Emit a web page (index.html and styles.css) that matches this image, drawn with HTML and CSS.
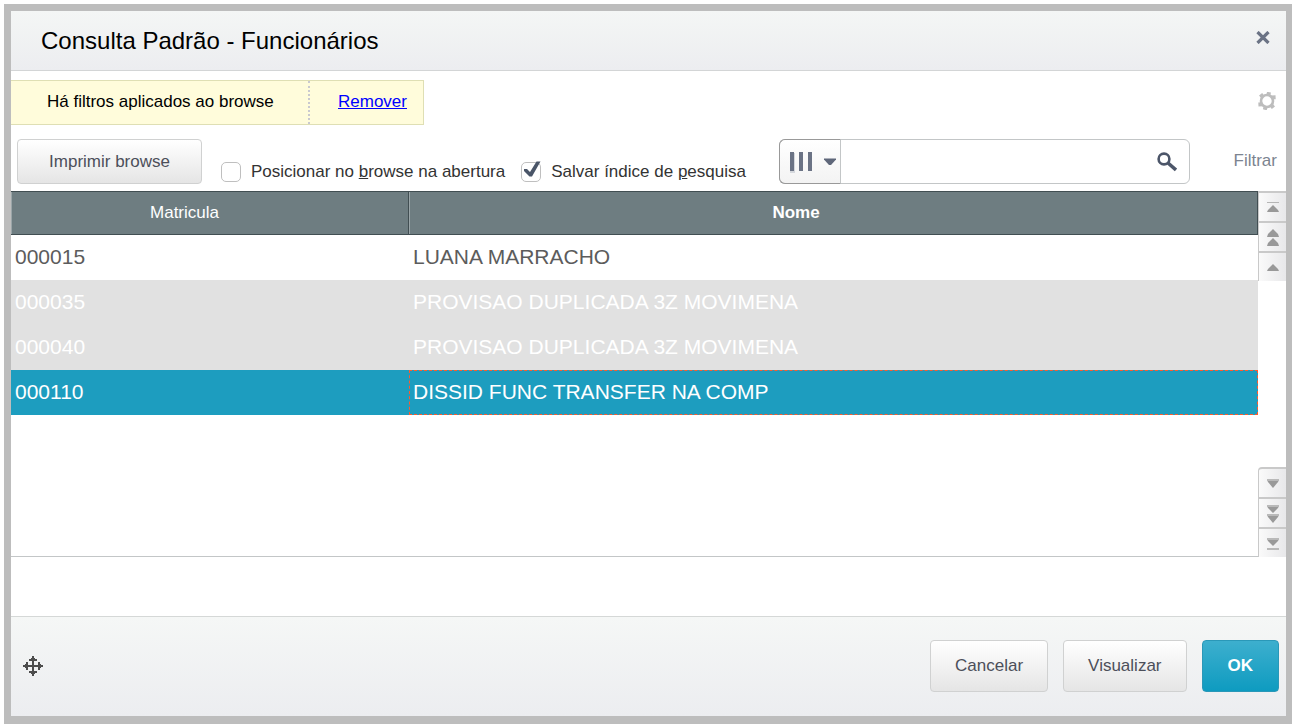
FILE: index.html
```html
<!DOCTYPE html>
<html lang="pt-BR">
<head>
    <meta charset="UTF-8">
    <meta name="viewport" content="width=device-width, initial-scale=1.0">
    <title>Consulta Padrão - Funcionários</title>
    <link rel="stylesheet" href="styles.css">
</head>
<body>
    <div class="dialog">
        <header class="header">
            <h1 class="title">Consulta Padrão - Funcionários</h1>
            <button class="icon-button" aria-label="Fechar">
                <svg width="14" height="13" viewBox="0 0 14 13"><path d="M1.5 1L12.500 12M12.500 1L1.500 12" stroke="#6b7385" stroke-width="3.200"/></svg>
            </button>
        </header>
        <main class="content">
            <div class="notice-row">
                <div class="notice">
                    <span class="notice-text">Há filtros aplicados ao browse</span>
                    <span class="notice-action"><a href="#">Remover</a></span>
                </div>
                <button class="icon-button" aria-label="Configurar">
                    <svg width="18" height="18" viewBox="0 0 18 18">
                        <circle cx="9" cy="9" r="6" fill="none" stroke="#bdbdbd" stroke-width="2.6"/>
                        <path d="M10.2 4L11 .2M13.500 5.400L17.600 5.200M12.800 12.500L15.400 15.800M7.800 14L6.800 17.800M4.400 12.200L.4 12.400M5 5.200L2.600 2.200" stroke="#bdbdbd" stroke-width="4"/>
                    </svg>
                </button>
            </div>
            <div class="toolbar">
                <button class="button print">Imprimir browse</button>
                <div class="checks">
                    <label class="check">
                        <span class="box"><input type="checkbox"></span>
                        <span>Posicionar no <u>b</u>rowse na abertura</span>
                    </label>
                    <label class="check">
                        <span class="box">
                            <input type="checkbox" checked>
                            <svg class="tick" width="18" height="18" viewBox="0 0 18 18"><path d="M1 9L4 9L7 12L13.5 1.5H17.5L9 16.5H6.5L1 11Z" fill="#4a5568"/></svg>
                        </span>
                        <span>Salvar índice de <u>p</u>esquisa</span>
                    </label>
                </div>
                <div class="search">
                    <button class="search-index" aria-label="Índice de pesquisa">
                        <svg width="24" height="22" viewBox="0 0 24 22"><path d="M3 2h3v20H1v-2h2z" fill="#d5d8dd"/><path d="M1 1h4v19H1zM10 1h4v19h-4zM19 1h4v19h-4z" fill="#6b7385"/></svg>
                        <svg width="12" height="8" viewBox="0 0 12 8"><path d="M0 .5h12v1L7 7H5L0 1.5z" fill="#5f677a"/></svg>
                    </button>
                    <input type="text" class="search-text" aria-label="Pesquisar">
                    <button class="search-go" aria-label="Buscar">
                        <svg width="20" height="20" viewBox="0 0 20 20"><circle cx="7" cy="7" r="5.4" fill="none" stroke="#4c5669" stroke-width="2.6"/><path d="M11 11L19 18" stroke="#4c5669" stroke-width="3.6"/></svg>
                    </button>
                </div>
                <a class="filter" href="#">Filtrar</a>
            </div>
            <div class="grid">
                <div class="grid-body">
                    <table>
                        <thead>
                            <tr>
                                <th class="code">Matricula</th>
                                <th class="sorted">Nome</th>
                            </tr>
                        </thead>
                        <tbody>
                            <tr>
                                <td>000015</td>
                                <td>LUANA MARRACHO</td>
                            </tr>
                            <tr class="blocked">
                                <td>000035</td>
                                <td>PROVISAO DUPLICADA 3Z MOVIMENA</td>
                            </tr>
                            <tr class="blocked">
                                <td>000040</td>
                                <td>PROVISAO DUPLICADA 3Z MOVIMENA</td>
                            </tr>
                            <tr class="selected">
                                <td>000110</td>
                                <td class="focused">DISSID FUNC TRANSFER NA COMP</td>
                            </tr>
                        </tbody>
                    </table>
                </div>
                <div class="scroller">
                    <div class="scroll-group">
                        <button class="scroll-button" aria-label="Primeiro">
                            <svg width="12" height="12" viewBox="0 0 12 12"><path d="M0 .5h12" stroke="#b5b5b5"/><path d="M6 3l5 5 1 2H0l1-2z" fill="#999"/></svg>
                        </button>
                        <button class="scroll-button" aria-label="Página anterior">
                            <svg width="12" height="18" viewBox="0 0 12 18"><path d="M6 0l5 5 1 3H0l1-3zM6 9l5 5 1 3H0l1-3z" fill="#999"/></svg>
                        </button>
                        <button class="scroll-button" aria-label="Linha anterior">
                            <svg width="12" height="8" viewBox="0 0 12 8"><path d="M6 0l5 5 1 2H0l1-2z" fill="#999"/></svg>
                        </button>
                    </div>
                    <div class="scroll-group">
                        <button class="scroll-button lower" aria-label="Próxima linha">
                            <svg width="12" height="9" viewBox="0 0 12 9"><path d="M0 1h12l-1 2-5 6-5-6z" fill="#999"/><path d="M0 1h12" stroke="#b9b9b9" stroke-width="2"/></svg>
                        </button>
                        <button class="scroll-button" aria-label="Próxima página">
                            <svg width="12" height="18" viewBox="0 0 12 18"><path d="M0 1h12l-1 2-5 5-5-5zM0 10h12l-1 2-5 6-5-6z" fill="#999"/><path d="M0 1h12M0 10h12" stroke="#b9b9b9" stroke-width="2"/></svg>
                        </button>
                        <button class="scroll-button" aria-label="Último">
                            <svg width="12" height="12" viewBox="0 0 12 12"><path d="M0 1h12l-1 2-5 5-5-5z" fill="#999"/><path d="M0 1h12M0 11h12" stroke="#b9b9b9" stroke-width="2"/></svg>
                        </button>
                    </div>
                </div>
            </div>
        </main>
        <footer class="footer">
            <svg width="20" height="20" viewBox="0 0 20 20"><path d="M9 0h2v2h1v1h2v2h-3v4h4V6h2v2h1v1h2v2h-2v1h-1v2h-2v-3h-4v4h3v2h-2v1h-1v2H9v-2H8v-1H6v-2h3v-4H5v3H3v-2H2v-1H0V9h2V8h1V6h2v3h4V5H6V3h2V2h1z" fill="#4d4d4d"/></svg>
            <div class="actions">
                <button class="button">Cancelar</button>
                <button class="button">Visualizar</button>
                <button class="button primary">OK</button>
            </div>
        </footer>
    </div>
</body>
</html>
```
FILE: styles.css
```css
* {
    box-sizing: border-box;
}
body {
    margin: 0;
    padding: 4px 0 3px 4px;
    min-height: 100vh;
    display: flex;
    background: #fff;
    font-family: "Liberation Sans", Arial, sans-serif;
    font-size: 17px;
    line-height: 20px;
    color: #333;
}
button, input {
    font: inherit;
    margin: 0;
}
svg {
    display: block;
}
.dialog {
    flex: 1;
    min-width: 0;
    display: flex;
    flex-direction: column;
    border: solid #bdbdbd;
    border-width: 7px 6px 8px 7px;
}
.header {
    display: flex;
    align-items: center;
    justify-content: space-between;
    height: 60px;
    padding: 0 16px 0 30px;
    background: linear-gradient(#f4f6f5, #ecedf0);
    border-bottom: 1px solid #d3d5d6;
}
.title {
    margin: 0;
    font-size: 24px;
    line-height: 28px;
    font-weight: normal;
    color: #000;
}
.icon-button {
    display: block;
    padding: 0;
    border: none;
    background: none;
    cursor: pointer;
}
.header .icon-button {
    margin-bottom: 6px;
}
.content {
    flex: 1;
    display: flex;
    flex-direction: column;
    padding: 9px 0 59px;
}
.notice-row {
    display: flex;
    align-items: center;
    justify-content: space-between;
    padding-right: 10px;
}
.notice-row .icon-button {
    margin-bottom: 4px;
}
.notice {
    display: flex;
    height: 45px;
    background: #fffcdb;
    border: 1px solid #dfdfb4;
    border-left: none;
    color: #000;
}
.notice-text {
    width: 299px;
    padding: 11px 0 0 36px;
    border-right: 2px dotted #c9c9d0;
}
.notice-action {
    width: 113px;
    padding: 11px 0 0 28px;
}
.notice a {
    color: #00f;
}
.toolbar {
    display: flex;
    align-items: flex-start;
    margin: 14px 0 7px;
    padding: 0 9px 0 6px;
}
.button {
    height: 52px;
    padding: 0 24px;
    border: 1px solid #d0d1d1;
    border-radius: 4px;
    background: linear-gradient(#fff, #e5e5e5);
    color: #4c4f5a;
    cursor: pointer;
}
.print {
    width: 185px;
    height: 45px;
    padding: 0;
}
.checks {
    display: flex;
    gap: 16px;
    padding: 23px 0 0 19px;
}
.check {
    display: flex;
    align-items: center;
    gap: 10px;
    white-space: nowrap;
}
.box {
    position: relative;
}
.box input {
    display: block;
    appearance: none;
    width: 20px;
    height: 20px;
    border: 1px solid #bfbfbf;
    border-radius: 5px;
    background: #fff;
}
.tick {
    position: absolute;
    left: 2px;
    top: -2px;
    pointer-events: none;
}
.search {
    display: flex;
    width: 411px;
    height: 45px;
    margin-left: auto;
    border: 1px solid #c3c6c7;
    border-radius: 6px;
}
.search-index {
    display: flex;
    align-items: center;
    gap: 11px;
    width: 62px;
    margin: -1px 0 -1px -1px;
    padding: 0 0 0 9px;
    border: 1px solid #999;
    border-right-color: #c3c6c7;
    border-radius: 6px 0 0 6px;
    background: linear-gradient(#fff, #f3f3f3);
}
.search-text {
    flex: 1;
    min-width: 0;
    padding: 0 10px;
    border: none;
    background: none;
}
.search-go {
    padding: 0 12px;
    border: none;
    background: none;
}
.filter {
    margin-left: 44px;
    padding-top: 12px;
    color: #7c8490;
    text-decoration: none;
}
.grid {
    flex: 1;
    display: flex;
}
.grid-body {
    flex: 1;
    border-bottom: 1px solid #c3c6c7;
}
table {
    width: 100%;
    border-collapse: separate;
    border-spacing: 0;
    table-layout: fixed;
}
th {
    height: 44px;
    padding: 0;
    background: #6e7d81;
    border: 1px solid #414e52;
    border-left: none;
    box-shadow: inset 1px 0 #9aa5a8;
    color: #fff;
    font-weight: normal;
}
th.code {
    width: 398px;
    padding-right: 50px;
}
th.sorted {
    padding-right: 74px;
    font-weight: bold;
}
td {
    height: 45px;
    padding: 0 4px 2px;
    font-size: 21px;
    line-height: 24px;
    color: #5c5c5c;
}
.blocked td {
    background: #e1e1e1;
    color: #fff;
}
.selected td {
    background: #1d9dbf;
    color: #fff;
}
.selected .focused {
    padding: 0 3px 2px;
    border: 1px dashed #ff5a2c;
}
.scroller {
    width: 28px;
    display: flex;
    flex-direction: column;
    justify-content: space-between;
}
.scroll-button {
    display: flex;
    align-items: center;
    justify-content: center;
    width: 28px;
    height: 30px;
    padding: 2px 0 0;
    border: solid #c9c9c9;
    border-width: 2px 0 0 1px;
    background: linear-gradient(to right, #fafafa, #e8e8ea);
}
.scroll-button.lower {
    padding-top: 0;
    border-top-left-radius: 4px;
}
.footer {
    display: flex;
    align-items: center;
    justify-content: space-between;
    height: 100px;
    padding: 0 7px 2px 12px;
    background: linear-gradient(#f5f7f6, #ecedf0);
    border-top: 1px solid #d5d8d7;
}
.actions {
    display: flex;
    gap: 15px;
}
.primary {
    padding: 0 25px;
    border-color: #2a98b8;
    background: linear-gradient(#3dafce, #0e9bc0);
    color: #fff;
    font-weight: bold;
}
```
